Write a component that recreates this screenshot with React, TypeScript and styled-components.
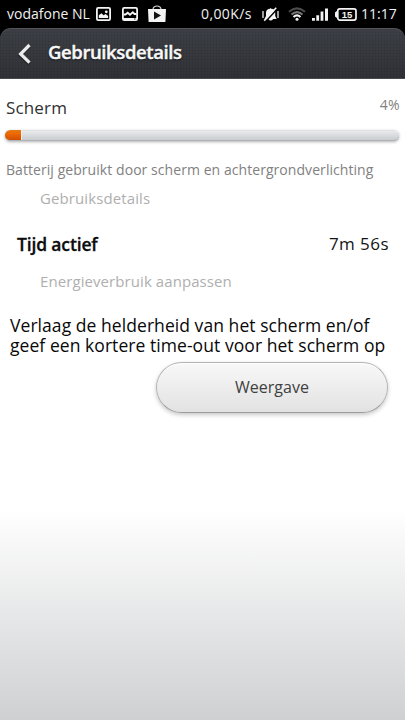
import React from "react";
import styled, { createGlobalStyle } from "styled-components";

const GlobalStyle = createGlobalStyle`
  * { box-sizing: border-box; }
  html, body { margin: 0; padding: 0; background: #000; }
  body { font-family: "Open Sans", "Noto Sans", sans-serif; }
`;

const Screen = styled.div`
  display: flex;
  flex-direction: column;
  width: 405px;
  height: 720px;
  overflow: hidden;
  background: #000;
`;

const StatusBar = styled.header`
  display: flex;
  align-items: center;
  flex: 0 0 28px;
  padding: 0 8px 0 7px;
  color: #f1f1f1;
`;

const StatusText = styled.span<{ $width: number; $spacing?: number }>`
  flex: 0 0 ${(p) => p.$width}px;
  font-size: 14px;
  line-height: 28px;
  letter-spacing: ${(p) => p.$spacing ?? 0}px;
  white-space: nowrap;
`;

const StatusIcon = styled.svg<{ $gap: number }>`
  display: block;
  flex: none;
  margin-left: ${(p) => p.$gap}px;
`;

const StatusGroup = styled.div`
  display: flex;
  align-items: center;
  margin-left: auto;
`;

const Clock = styled(StatusText)`
  margin-left: 4px;
`;

const TitleBar = styled.div`
  display: flex;
  align-items: center;
  flex: 0 0 51px;
  padding-left: 17px;
  border-top: 1px solid #53555a;
  border-bottom: 1px solid #4a4c50;
  border-radius: 11px 11px 0 0;
  background:
    repeating-linear-gradient(90deg, rgba(0, 0, 0, 0.06) 0 1px, transparent 1px 3px),
    repeating-linear-gradient(rgba(0, 0, 0, 0.05) 0 1px, transparent 1px 3px),
    linear-gradient(#3d4046, #303237);
`;

const Title = styled.h1`
  margin: -3px 0 0 15px;
  color: #f8f8f8;
  font-size: 18.5px;
  font-weight: 600;
  line-height: 46px;
  letter-spacing: -0.4px;
  -webkit-text-stroke: 0.4px #f8f8f8;
  text-shadow: 0 1px 2px rgba(0, 0, 0, 0.7);
`;

const Content = styled.main`
  flex: 1;
  background: linear-gradient(#fff 0, #fff 430px, #cfd0d2 641px);
`;

const Row = styled.div<{ $height: number; $inset: string }>`
  display: flex;
  justify-content: space-between;
  align-items: flex-start;
  height: ${(p) => p.$height}px;
  padding: ${(p) => p.$inset};
`;

const Label = styled.span<{
  $size: number;
  $color: string;
  $spacing?: number;
}>`
  color: ${(p) => p.$color};
  font-size: ${(p) => p.$size}px;
  line-height: 20px;
  letter-spacing: ${(p) => p.$spacing ?? 0}px;
  white-space: nowrap;
`;

const StrongLabel = styled(Label)`
  font-weight: 600;
  -webkit-text-stroke: 0.3px currentColor;
`;

const Percentage = styled(Label)`
  margin-top: -3px;
`;

const TrackShadow = styled.div`
  height: 30px;
  padding: 0 6px 0 5px;
  filter: drop-shadow(0 1px 1.5px rgba(0, 0, 0, 0.3));
`;

const Track = styled.div`
  height: 11px;
  overflow: hidden;
  border-radius: 6px;
  border-bottom: 1px solid #b0b3b6;
  background: linear-gradient(#dcdee0, #e6e8ea 15%, #c9ccd0);
`;

const Fill = styled.div`
  height: 11px;
  border-right: 1px solid #edf0f2;
  background: linear-gradient(#e37a1a, #ee6b00 30%, #d85400 80%, #b84800);
`;

const Advice = styled.p`
  height: 46px;
  margin: 0;
  padding-left: 10px;
  color: #080808;
  font-size: 17.5px;
  line-height: 19.5px;
  letter-spacing: 0.06px;
  white-space: nowrap;
`;

const Button = styled.button`
  display: block;
  width: 232px;
  height: 51px;
  margin: 0 17px 0 auto;
  padding: 0;
  border: 1px solid #b3b3b3;
  border-bottom-color: #9c9c9c;
  border-radius: 26px;
  color: #414141;
  font: 400 16px/49px "Open Sans", sans-serif;
  background: linear-gradient(#f8f8f8, #e2e2e2);
  box-shadow: 0 2px 4px rgba(0, 0, 0, 0.22), inset 0 1px 0 #fff;
`;

const BackIcon = () => (
  <svg width="16" height="22" viewBox="0 0 16 22" fill="none">
    <path d="M12.5 2.5 3 11.2l9.5 8.7" stroke="#15171a" strokeWidth="3.5" opacity=".5" transform="translate(0 1)" />
    <path d="M12.5 2 3.6 11l8.9 8.7" stroke="#ececec" strokeWidth="3.2" />
  </svg>
);

export default function App() {
  return (
    <>
      <GlobalStyle />
      <Screen>
        <StatusBar>
          <StatusText $width={83}>vodafone NL</StatusText>
          <StatusIcon $gap={6} width="15" height="14" viewBox="0 0 15 14">
            <rect x=".9" y=".9" width="13.2" height="12.2" rx="1.3" fill="none" stroke="#f4f4f4" strokeWidth="1.8" />
            <path d="M2.8 11V8.3l2.6-2 2.2 2 2-1.2 2.5 2V11z" fill="#f4f4f4" />
            <circle cx="10.3" cy="4.8" r="1.4" fill="#f4f4f4" />
          </StatusIcon>
          <StatusIcon $gap={11} width="16" height="14" viewBox="0 0 16 14">
            <rect x=".9" y=".9" width="14.2" height="12.2" rx="1.3" fill="none" stroke="#f4f4f4" strokeWidth="1.8" />
            <path d="M1.5 7.5h2L5.7 5.7 8 7.7l2.8-2.4L12.5 7h2" fill="none" stroke="#f4f4f4" strokeWidth="1.9" />
            <path d="M1 11h14v2H1z" fill="#f4f4f4" />
            <path d="M12 11.4h1.5v1H12z" fill="#222" />
          </StatusIcon>
          <StatusIcon $gap={10} width="18" height="19" viewBox="0 0 18 19">
            <path d="M5 5V4q.5-3 4-3t4 3v1" fill="none" stroke="#d8d8d8" strokeWidth="1.2" />
            <path d="M0 4h18l-.6 13H.6z" fill="#f4f4f4" />
            <path d="M6 6.4 13 10.4l-7 4z" fill="#111" />
          </StatusIcon>
          <StatusGroup>
            <StatusText $width={51} $spacing={0.4}>0,00K/s</StatusText>
            <StatusIcon $gap={10} width="17" height="15" viewBox="0 0 17 15">
              <path d="M2.5 12 4 9V5.2Q4.5 2 8 1.7 8.5.2 9.2 1.7 12.7 2 13.2 5.2V9l1.5 3zM6.2 12h5q-2.5 3-5 0z" fill="#f4f4f4" />
              <path d="M1 4v7M16 4v7" stroke="#ddd" strokeWidth="1.4" />
              <path d="M3.8 14.2 15 2.2" stroke="#000" strokeWidth="1.6" />
              <path d="M2.2 13.6 14.2 .8" stroke="#f4f4f4" strokeWidth="1.6" />
            </StatusIcon>
            <StatusIcon $gap={9} width="18" height="14" viewBox="0 0 18 14" fill="none">
              <path d="M1 4.8Q9-2.1 17 4.8" stroke="#4c4c4c" strokeWidth="2" />
              <path d="M3.5 7.5Q9 2.8 14.5 7.5" stroke="#777" strokeWidth="2" />
              <path d="M5.5 10Q9 6.9 12.5 10" stroke="#f4f4f4" strokeWidth="2.1" />
              <circle cx="9" cy="12.2" r="1.5" fill="#f4f4f4" />
            </StatusIcon>
            <StatusIcon $gap={6} width="17" height="14" viewBox="0 0 17 14">
              <path d="M0 11h2.9v2.8H0zM4.3 8.2h2.8v5.6H4.3zM8.6 4.5h2.8v9.3H8.6zM13 1.5h3v12.3h-3z" fill="#f4f4f4" />
            </StatusIcon>
            <StatusIcon $gap={6} width="22" height="13" viewBox="0 0 22 13">
              <rect x="2.8" y=".9" width="18.2" height="11.2" rx="2" fill="none" stroke="#f4f4f4" strokeWidth="1.7" />
              <path d="M0 4.5 2.5 2.5v8L0 8.5z" fill="#f4f4f4" />
              <text x="12" y="10" fill="#f4f4f4" fontFamily="Liberation Sans" fontSize="9.5" fontWeight="700" textAnchor="middle">15</text>
            </StatusIcon>
            <Clock $width={36}>11:17</Clock>
          </StatusGroup>
        </StatusBar>
        <TitleBar>
          <BackIcon />
          <Title>Gebruiksdetails</Title>
        </TitleBar>
        <Content>
          <Row $height={51} $inset="19px 5px 0 6px">
            <Label $size={17} $color="#303030" $spacing={0.15}>Scherm</Label>
            <Percentage $size={14} $color="#818181" $spacing={0.3}>4%</Percentage>
          </Row>
          <TrackShadow>
            <Track>
              <Fill style={{ width: "17px" }} />
            </Track>
          </TrackShadow>
          <Row $height={28} $inset="0 6px">
            <Label $size={14} $color="#818181" $spacing={0.06}>Batterij gebruikt door scherm en achtergrondverlichting</Label>
          </Row>
          <Row $height={46} $inset="0 40px">
            <Label $size={15} $color="#afafaf" $spacing={0.1}>Gebruiksdetails</Label>
          </Row>
          <Row $height={37} $inset="0 16px 0 17px">
            <StrongLabel $size={17.5} $color="#0c0c0c" $spacing={-0.15}>Tijd actief</StrongLabel>
            <Label $size={17} $color="#141414" $spacing={0.45}>7m 56s</Label>
          </Row>
          <Row $height={45} $inset="0 40px">
            <Label $size={15} $color="#afafaf" $spacing={0.08}>Energieverbruik aanpassen</Label>
          </Row>
          <Advice>
            Verlaag de helderheid van het scherm en/of
            <br />
            geef een kortere time-out voor het scherm op
          </Advice>
          <Button>Weergave</Button>
        </Content>
      </Screen>
    </>
  );
}
